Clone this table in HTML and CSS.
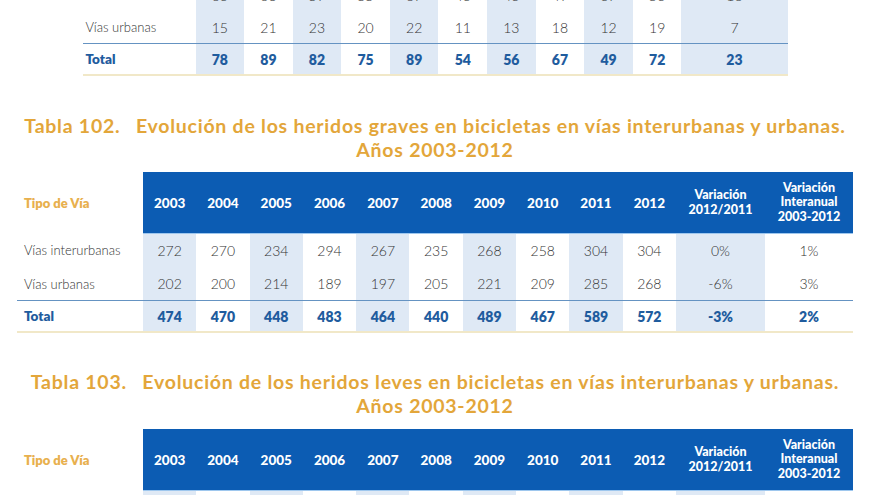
FILE: index.html
```html
<!DOCTYPE html>
<html lang="es">
<head>
<meta charset="utf-8">
<title>Tablas heridos en bicicleta</title>
<link rel="stylesheet" href="styles.css">
</head>
<body>
<div class="page">
  <section class="block block-top">
    <table class="data narrow">
      <colgroup>
        <col class="cn-label">
        <col class="cn-yr sh"><col class="cn-yr"><col class="cn-yr sh"><col class="cn-yr"><col class="cn-yr sh">
        <col class="cn-yr"><col class="cn-yr sh"><col class="cn-yr"><col class="cn-yr sh"><col class="cn-yr">
        <col class="cn-last sh">
      </colgroup>
      <tbody>
        <tr class="row"><td class="label">Vías interurbanas</td><td>63</td><td>68</td><td>59</td><td>55</td><td>67</td><td>43</td><td>43</td><td>49</td><td>37</td><td>53</td><td>16</td></tr>
        <tr class="row"><td class="label">Vías urbanas</td><td>15</td><td>21</td><td>23</td><td>20</td><td>22</td><td>11</td><td>13</td><td>18</td><td>12</td><td>19</td><td>7</td></tr>
        <tr class="total"><td class="label">Total</td><td>78</td><td>89</td><td>82</td><td>75</td><td>89</td><td>54</td><td>56</td><td>67</td><td>49</td><td>72</td><td>23</td></tr>
      </tbody>
    </table>
  </section>

  <section class="block">
    <h2 class="title"><span class="num">Tabla 102.</span> Evolución de los heridos graves en bicicletas en vías interurbanas y urbanas.<br>Años 2003-2012</h2>
    <table class="data wide">
      <colgroup>
        <col class="cw-label">
        <col class="cw-yr sh"><col class="cw-yr"><col class="cw-yr sh"><col class="cw-yr"><col class="cw-yr sh">
        <col class="cw-yr"><col class="cw-yr sh"><col class="cw-yr"><col class="cw-yr sh"><col class="cw-yr">
        <col class="cw-var sh"><col class="cw-int">
      </colgroup>
      <thead>
        <tr class="head">
          <th class="tipo">Tipo de Vía</th>
          <th>2003</th><th>2004</th><th>2005</th><th>2006</th><th>2007</th><th>2008</th><th>2009</th><th>2010</th><th>2011</th><th>2012</th>
          <th class="multi">Variación<br>2012/2011</th>
          <th class="multi">Variación<br>Interanual<br>2003-2012</th>
        </tr>
      </thead>
      <tbody>
        <tr class="row first"><td class="label">Vías interurbanas</td><td>272</td><td>270</td><td>234</td><td>294</td><td>267</td><td>235</td><td>268</td><td>258</td><td>304</td><td>304</td><td>0%</td><td>1%</td></tr>
        <tr class="row"><td class="label">Vías urbanas</td><td>202</td><td>200</td><td>214</td><td>189</td><td>197</td><td>205</td><td>221</td><td>209</td><td>285</td><td>268</td><td>-6%</td><td>3%</td></tr>
        <tr class="total"><td class="label">Total</td><td>474</td><td>470</td><td>448</td><td>483</td><td>464</td><td>440</td><td>489</td><td>467</td><td>589</td><td>572</td><td>-3%</td><td>2%</td></tr>
      </tbody>
    </table>
  </section>

  <section class="block">
    <h2 class="title"><span class="num">Tabla 103.</span> Evolución de los heridos leves en bicicletas en vías interurbanas y urbanas.<br>Años 2003-2012</h2>
    <table class="data wide">
      <colgroup>
        <col class="cw-label">
        <col class="cw-yr sh"><col class="cw-yr"><col class="cw-yr sh"><col class="cw-yr"><col class="cw-yr sh">
        <col class="cw-yr"><col class="cw-yr sh"><col class="cw-yr"><col class="cw-yr sh"><col class="cw-yr">
        <col class="cw-var sh"><col class="cw-int">
      </colgroup>
      <thead>
        <tr class="head">
          <th class="tipo">Tipo de Vía</th>
          <th>2003</th><th>2004</th><th>2005</th><th>2006</th><th>2007</th><th>2008</th><th>2009</th><th>2010</th><th>2011</th><th>2012</th>
          <th class="multi">Variación<br>2012/2011</th>
          <th class="multi">Variación<br>Interanual<br>2003-2012</th>
        </tr>
      </thead>
      <tbody>
        <tr class="row first"><td class="label">&nbsp;</td><td></td><td></td><td></td><td></td><td></td><td></td><td></td><td></td><td></td><td></td><td></td><td></td></tr>
      </tbody>
    </table>
  </section>
</div>
</body>
</html>
```

FILE: styles.css
```css
html, body {
  margin: 0;
  padding: 0;
  background: #ffffff;
}

body {
  font-family: Lato, "Open Sans", "DejaVu Sans", sans-serif;
  color: #4a4a4a;
  overflow: hidden;
  height: 495px;
}

.page {
  width: 836px;
  margin-left: 17px;
  display: flex;
  flex-direction: column;
}

.block-top {
  margin-top: -21px;
  display: flex;
  justify-content: center;
}

.title {
  margin: 38px 0 10px 0;
  text-align: center;
  font-size: 19.5px;
  line-height: 24px;
  font-weight: 700;
  letter-spacing: 0.75px;
  color: #e3a63a;
  white-space: nowrap;
}

.block + .block + .block .title {
  margin-top: 37px;
  margin-bottom: 11px;
}

.num {
  margin-right: 10px;
}

.data {
  border-collapse: collapse;
  table-layout: fixed;
}

.narrow { width: 705px; }
.wide { width: 836px; }

.cn-label { width: 113px; }
.cn-yr { width: 48.6px; }
.cn-last { width: 106px; }

.cw-label { width: 126px; }
.cw-yr { width: 53.3px; }
.cw-var { width: 89px; }
.cw-int { width: 88px; }

col.sh { background: #dfe9f5; }

.data td {
  padding: 0;
  text-align: center;
  font-size: 14px;
  font-weight: 300;
  color: #333333;
  white-space: nowrap;
}

.data td.label {
  text-align: left;
  font-size: 13px;
  font-weight: 300;
  color: #333333;
  padding-left: 7px;
}

.narrow td.label { padding-left: 3px; }

.row td { height: 32px; }
.wide .row td { height: 33px; }

.total td {
  height: 30px;
  font-weight: 800;
  color: #1f5c9e;
  border-top: 1.5px solid #6593c2;
  border-bottom: 2px solid #f1e8c8;
}

.total td.label {
  color: #1f5c9e;
  font-size: 13.5px;
  font-weight: 800;
}

.head th {
  height: 61px;
  padding: 0;
  background: #0c5cb3;
  color: #ffffff;
  font-size: 13.5px;
  font-weight: 900;
  text-align: center;
  border-bottom: 1px solid #9ec7ee;
}

.head th.multi {
  font-size: 12.5px;
  line-height: 14.5px;
}

.head th.tipo {
  background: #ffffff;
  border-bottom: none;
  text-align: left;
  padding-left: 7px;
  color: #e8b04e;
  font-size: 13px;
  font-weight: 800;
}

.row.first td { height: 33px; }
```
